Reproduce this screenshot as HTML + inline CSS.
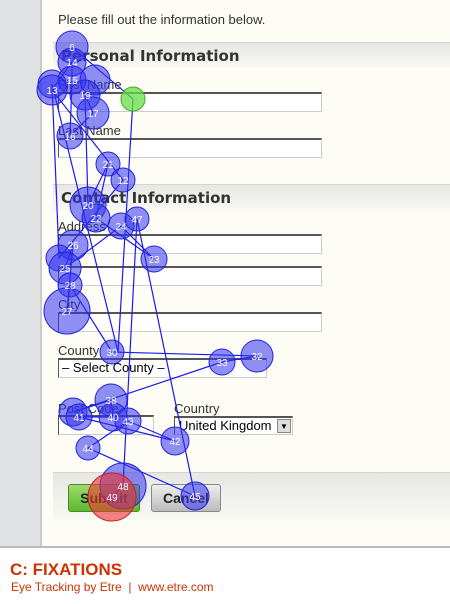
<!DOCTYPE html>
<html><head><meta charset="utf-8"><style>
*{margin:0;padding:0;box-sizing:border-box}
body{width:450px;height:604px;position:relative;overflow:hidden;background:#fff;font-family:"Liberation Sans","DejaVu Sans",sans-serif}
.strip{position:absolute;left:0;top:0;width:40px;height:546px;background:#dfe1e3}
.page{position:absolute;left:40px;top:0;width:410px;height:546px;background:#fdfdf6;border-left:2px solid #c8cacc}
.t{position:absolute;font-size:13px;color:#333}
.bar{position:absolute;left:53px;width:397px;height:26px;background:linear-gradient(#e6e6e3,#f8f8f5);border-top:1px solid #d4d4d0}
.bar span{position:absolute;left:8px;top:4px;font-size:15px;font-weight:bold;color:#333;font-family:"DejaVu Sans",sans-serif}
.inp{position:absolute;background:#fff;border:1px solid #ccc;border-top:2px solid #555;border-left:1px solid #555}
.foot{position:absolute;left:0;top:546px;width:450px;height:58px;border-top:2px solid #bbb;background:#fff}
</style></head><body>
<div class="strip"></div>
<div class="page"></div>
<div class="t" style="left:58px;top:12px">Please fill out the information below.</div>
<div class="bar" style="top:42px"><span>Personal Information</span></div>
<div class="t" style="left:58px;top:77px">First Name</div>
<div class="inp" style="left:58px;top:92px;width:264px;height:20px"></div>
<div class="t" style="left:58px;top:123px">Last Name</div>
<div class="inp" style="left:58px;top:138px;width:264px;height:20px"></div>
<div class="bar" style="top:184px"><span>Contact Information</span></div>
<div class="t" style="left:58px;top:219px">Address</div>
<div class="inp" style="left:58px;top:234px;width:264px;height:20px"></div>
<div class="inp" style="left:58px;top:266px;width:264px;height:20px"></div>
<div class="t" style="left:58px;top:297px">City</div>
<div class="inp" style="left:58px;top:312px;width:264px;height:20px"></div>
<div class="t" style="left:58px;top:343px">County</div>
<div class="inp" style="left:58px;top:358px;width:209px;height:20px;font-size:13px;padding-left:3px;line-height:16px;color:#000">– Select County –</div>
<div class="t" style="left:58px;top:401px">Post Code</div>
<div class="inp" style="left:58px;top:415px;width:96px;height:20px"></div>
<div class="t" style="left:174px;top:401px">Country</div>
<div class="inp" style="left:174px;top:416px;width:119px;height:19px;font-size:13px;padding-left:4px;line-height:15px;color:#000">United Kingdom<span style="position:absolute;right:1px;top:1px;width:14px;height:14px;background:#ddd;border:1px solid #888;font-size:8px;text-align:center;line-height:13px">▼</span></div>
<div style="position:absolute;left:53px;top:472px;width:397px;height:48px;background:linear-gradient(#e6e6e3,#f8f8f5);border-top:1px solid #d4d4d0"></div>
<div style="position:absolute;left:68px;top:484px;width:72px;height:28px;background:linear-gradient(#9ddc6a,#5cb82e);border:1px solid #4a8a2a;border-radius:3px;font-weight:bold;font-size:14px;text-align:center;line-height:26px;color:#222">Submit</div>
<div style="position:absolute;left:151px;top:484px;width:70px;height:28px;background:linear-gradient(#eee,#bbb);border:1px solid #888;border-radius:3px;font-weight:bold;font-size:14px;text-align:center;line-height:26px;color:#222">Cancel</div>
<svg style="position:absolute;left:0;top:0" width="450" height="546">
<polyline fill="none" stroke="#1a1aee" stroke-width="1.2" points="72,47 133,99 118,352 52,84 59,258 123,180 52,90 72,62 72,80 70,136 93,113 85,95 88,205 108,164 96,218 154,259 121,226 65,268 73,245 67,311 70,285 112,352 257,356 222,362 73,412 111,400 113,417 79,417 175,441 128,421 88,448 195,496 137,219 123,486 112,497"/>
<g fill="#3333ee" fill-opacity="0.55" stroke="#2222dd" stroke-width="1">
<circle cx="72" cy="47" r="16"/><circle cx="72" cy="62" r="14"/><circle cx="52" cy="84" r="14"/><circle cx="72" cy="80" r="14"/><circle cx="95" cy="80" r="15"/><circle cx="52" cy="90" r="15"/><circle cx="85" cy="95" r="15"/><circle cx="93" cy="113" r="16"/><circle cx="70" cy="136" r="13"/><circle cx="108" cy="164" r="12"/><circle cx="123" cy="180" r="12"/><circle cx="88" cy="205" r="18"/><circle cx="96" cy="218" r="14"/><circle cx="121" cy="226" r="13"/><circle cx="137" cy="219" r="12"/><circle cx="73" cy="245" r="15"/><circle cx="59" cy="258" r="13"/><circle cx="65" cy="268" r="16"/><circle cx="154" cy="259" r="13"/><circle cx="70" cy="285" r="12"/><circle cx="67" cy="311" r="23"/><circle cx="112" cy="352" r="12"/><circle cx="222" cy="362" r="13"/><circle cx="257" cy="356" r="16"/><circle cx="111" cy="400" r="16"/><circle cx="73" cy="412" r="14"/><circle cx="79" cy="417" r="13"/><circle cx="113" cy="417" r="14"/><circle cx="128" cy="421" r="13"/><circle cx="175" cy="441" r="14"/><circle cx="88" cy="448" r="12"/><circle cx="123" cy="486" r="23"/><circle cx="195" cy="496" r="14"/>
</g>
<circle cx="133" cy="99" r="12" fill="#66dd44" fill-opacity="0.75" stroke="#44aa22"/>
<circle cx="112" cy="497" r="24" fill="#ee3333" fill-opacity="0.6" stroke="#cc2222"/>
<g fill="#fff" font-size="10" text-anchor="middle" font-family="Liberation Sans,sans-serif">
<text x="72" y="51">6</text><text x="72" y="66">14</text><text x="72" y="84">15</text><text x="52" y="94">13</text><text x="85" y="99">19</text><text x="93" y="117">17</text><text x="70" y="140">16</text><text x="108" y="168">21</text><text x="123" y="184">12</text><text x="88" y="209">20</text><text x="96" y="222">22</text><text x="121" y="230">24</text><text x="137" y="223">47</text><text x="73" y="249">26</text><text x="65" y="272">25</text><text x="154" y="263">23</text><text x="70" y="289">28</text><text x="67" y="315">27</text><text x="112" y="356">30</text><text x="222" y="366">33</text><text x="257" y="360">32</text><text x="111" y="404">38</text><text x="79" y="421">41</text><text x="113" y="421">40</text><text x="128" y="425">43</text><text x="175" y="445">42</text><text x="88" y="452">44</text><text x="123" y="490">48</text><text x="195" y="500">45</text><text x="112" y="501">49</text>
</g>
</svg>
<div class="foot">
<div style="position:absolute;left:10px;top:12px;font-size:17px;font-weight:bold;color:#cc3300">C: FIXATIONS</div>
<div style="position:absolute;left:11px;top:32px;font-size:12px;color:#cc3300">Eye Tracking by Etre &nbsp;|&nbsp; www.etre.com</div>
</div>
</body></html>
